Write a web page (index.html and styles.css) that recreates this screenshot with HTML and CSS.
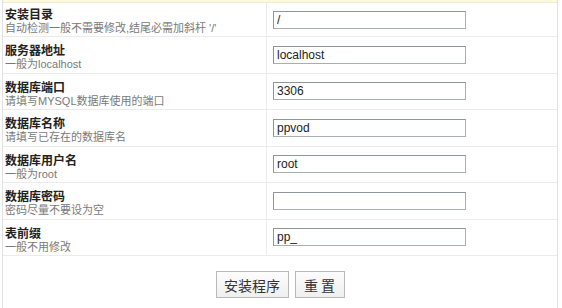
FILE: index.html
```html
<!DOCTYPE html>
<html lang="zh-CN">
<head>
<meta charset="utf-8">
<title>安装</title>
<link rel="stylesheet" href="styles.css">
</head>
<body>
<div class="panel">
  <div class="topband"></div>
  <div class="row first">
    <div class="label"><div class="title">安装目录</div><div class="desc">自动检测一般不需要修改,结尾必需加斜杆 '/'</div></div>
    <div class="field"><input class="txt" type="text" value="/"></div>
  </div>
  <div class="row">
    <div class="label"><div class="title">服务器地址</div><div class="desc">一般为localhost</div></div>
    <div class="field"><input class="txt" type="text" value="localhost"></div>
  </div>
  <div class="row">
    <div class="label"><div class="title">数据库端口</div><div class="desc">请填写MYSQL数据库使用的端口</div></div>
    <div class="field"><input class="txt" type="text" value="3306"></div>
  </div>
  <div class="row">
    <div class="label"><div class="title">数据库名称</div><div class="desc">请填写已存在的数据库名</div></div>
    <div class="field"><input class="txt" type="text" value="ppvod"></div>
  </div>
  <div class="row">
    <div class="label"><div class="title">数据库用户名</div><div class="desc">一般为root</div></div>
    <div class="field"><input class="txt" type="text" value="root"></div>
  </div>
  <div class="row">
    <div class="label"><div class="title">数据库密码</div><div class="desc">密码尽量不要设为空</div></div>
    <div class="field"><input class="txt" type="password" value=""></div>
  </div>
  <div class="row">
    <div class="label"><div class="title">表前缀</div><div class="desc">一般不用修改</div></div>
    <div class="field"><input class="txt" type="text" value="pp_"></div>
  </div>
  <div class="actions">
    <button class="btn wide" type="button">安装程序</button>
    <button class="btn narrow" type="button">重 置</button>
  </div>
</div>
</body>
</html>
```

FILE: styles.css
```css
html, body {
  margin: 0;
  padding: 0;
  background: #ffffff;
}
body {
  font-family: "Liberation Sans", Arial, "Noto Sans CJK SC", sans-serif;
  font-size: 12px;
  color: #333;
}
.panel {
  margin-left: 2px;
  width: 556px;
  height: 308px;
  border-left: 1px solid #e2e2e2;
  border-right: 1px solid #e2e2e2;
  box-sizing: border-box;
}
.topband {
  height: 2px;
  background: #fcf9dc;
  border-bottom: 1px solid #efecd0;
}
.row {
  display: flex;
  height: 36.5px;
  border-bottom: 1px solid #ebebeb;
  box-sizing: border-box;
}
.row.first {
  height: 34px;
}
.label {
  width: 264px;
  flex: none;
  border-right: 1px solid #ebebeb;
  padding: 8px 0 0 2px;
  box-sizing: border-box;
  line-height: 13px;
  font-family: "Liberation Sans", Arial, "Noto Sans CJK SC", sans-serif;
}
.row.first .label {
  padding-top: 6px;
}
.title {
  font-weight: bold;
  color: #222;
  font-size: 12px;
}
.desc {
  color: #7a7a7a;
  font-size: 11px;
  white-space: nowrap;
}
.field {
  flex: 1;
  display: flex;
  align-items: center;
  padding-left: 6px;
}
.txt {
  width: 193px;
  height: 18px;
  box-sizing: border-box;
  margin: 0;
  padding: 0 3px;
  border: 1px solid #a9aeb3;
  border-top-color: #8f959a;
  border-left-color: #8f959a;
  background: #fff;
  font-family: "Liberation Sans", Arial, sans-serif;
  font-size: 12px;
  color: #222;
  outline: none;
}
.actions {
  display: flex;
  justify-content: center;
  gap: 6px;
  padding-top: 15px;
}
.btn {
  height: 27px;
  margin: 0;
  padding: 0;
  border: 1px solid #b9b9b9;
  background: linear-gradient(#fdfdfd, #efefef);
  font-family: "Noto Sans CJK SC", sans-serif;
  font-size: 14px;
  color: #333;
  box-sizing: border-box;
}
.btn.wide { width: 73px; }
.btn.narrow { width: 50px; }
```
